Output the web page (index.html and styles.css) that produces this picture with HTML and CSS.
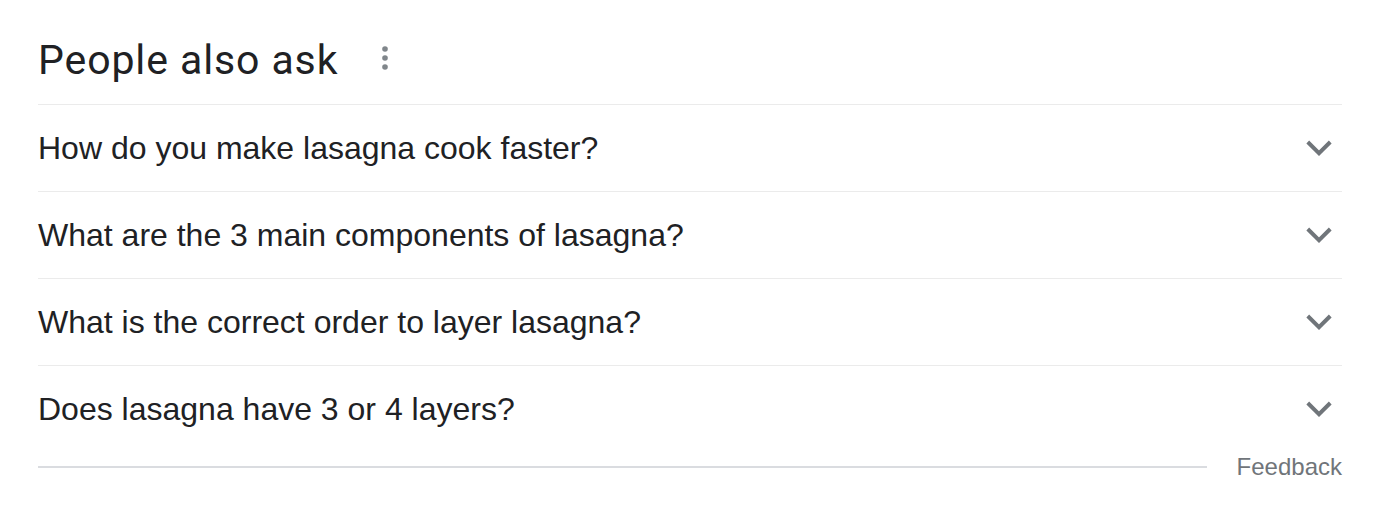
FILE: index.html
```html
<!DOCTYPE html>
<html lang="en">
<head>
  <meta charset="UTF-8">
  <title>People also ask</title>
  <link rel="stylesheet" href="styles.css">
</head>
<body>
<div class="paa">
  <div class="paa-header">
    <h2>People also ask</h2>
    <span class="more">
      <svg width="8" height="26" viewBox="0 0 8 26"><circle cx="4" cy="4" r="2.8"/><circle cx="4" cy="13" r="2.8"/><circle cx="4" cy="22" r="2.8"/></svg>
    </span>
  </div>

  <div class="question">
    <span>How do you make lasagna cook faster?</span>
    <svg class="chevron" viewBox="0 0 24 24"><path d="M4.5 8l7.5 7.5 7.5-7.5"/></svg>
  </div>
  <div class="question">
    <span>What are the 3 main components of lasagna?</span>
    <svg class="chevron" viewBox="0 0 24 24"><path d="M4.5 8l7.5 7.5 7.5-7.5"/></svg>
  </div>
  <div class="question">
    <span>What is the correct order to layer lasagna?</span>
    <svg class="chevron" viewBox="0 0 24 24"><path d="M4.5 8l7.5 7.5 7.5-7.5"/></svg>
  </div>
  <div class="question last">
    <span>Does lasagna have 3 or 4 layers?</span>
    <svg class="chevron" viewBox="0 0 24 24"><path d="M4.5 8l7.5 7.5 7.5-7.5"/></svg>
  </div>

  <div class="paa-footer">
    <div class="rule"></div>
    <a class="feedback">Feedback</a>
  </div>
</div>
</body>
</html>
```

FILE: styles.css
```css
body {
  margin: 0;
  background: #fff;
  color: #202124;
  font-family: "Liberation Sans", Arial, sans-serif;
}
.paa {
  margin: 0 48px 0 38px;
  padding-top: 32px;
}
.paa-header {
  display: flex;
  align-items: center;
  height: 72px;
  border-bottom: 1px solid #ebebeb;
}
.paa-header h2 {
  margin: 0;
  font-family: Roboto, "Open Sans", sans-serif;
  font-weight: 400;
  font-size: 41px;
  letter-spacing: 0.9px;
  position: relative;
  top: -8px;
}
.more {
  margin-left: 43px;
  display: flex;
  position: relative;
  top: -10px;
}
.more svg {
  fill: #80868b;
}
.question {
  display: flex;
  align-items: center;
  justify-content: space-between;
  height: 86px;
  border-bottom: 1px solid #ebebeb;
  font-size: 32px;
}
.question.last {
  border-bottom: none;
}
.chevron {
  width: 36px;
  height: 36px;
  margin-right: 5px;
  fill: none;
  stroke: #70757a;
  stroke-width: 2.6;
}
.paa-footer {
  display: flex;
  align-items: center;
  margin-top: 1px;
}
.rule {
  flex: 1;
  height: 2px;
  background: #dadce0;
}
.feedback {
  margin-left: 30px;
  font-size: 24px;
  color: #70757a;
}
```
